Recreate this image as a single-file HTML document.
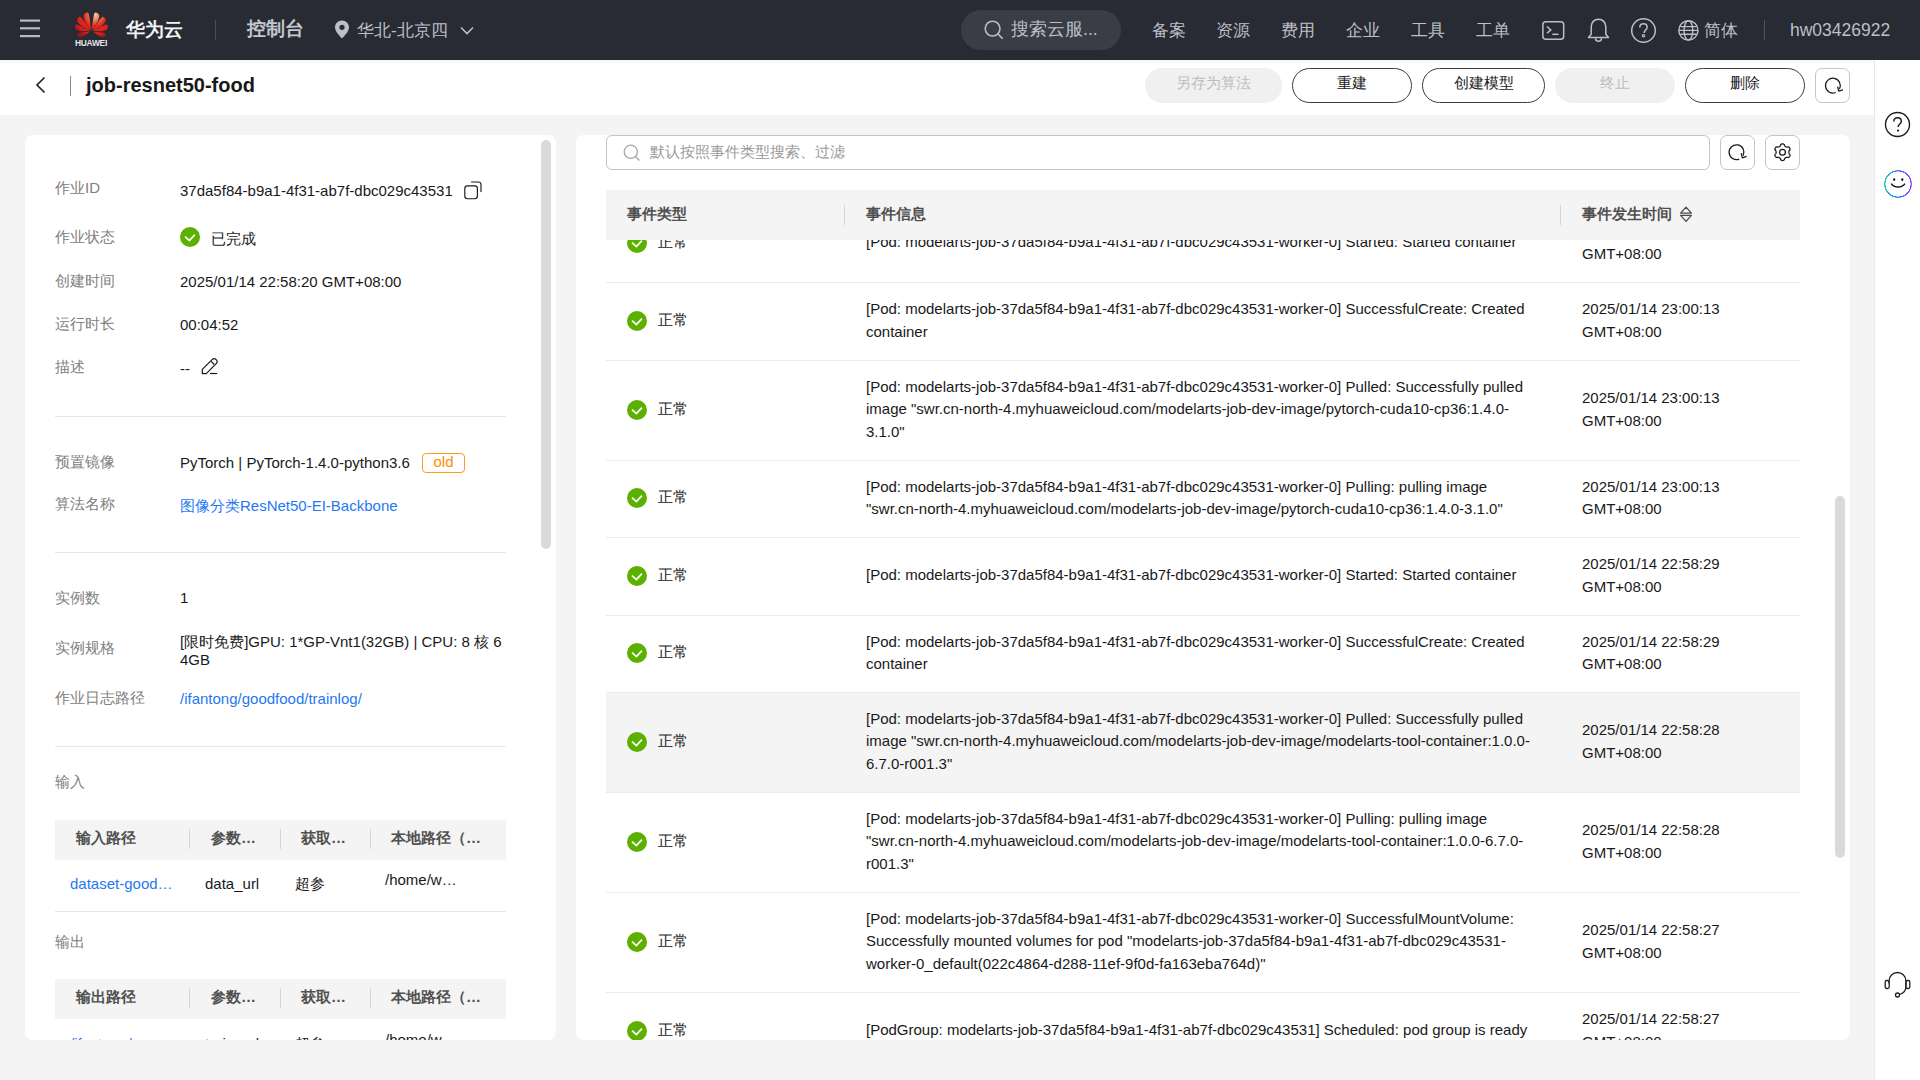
<!DOCTYPE html>
<html><head><meta charset="utf-8">
<style>
*{box-sizing:border-box;margin:0;padding:0}
html,body{width:1920px;height:1080px;overflow:hidden;background:#f4f4f4;font-family:"Liberation Sans",sans-serif;color:#191919}
.a{position:absolute}
.nw{white-space:nowrap}
#nav{position:absolute;left:0;top:0;width:1920px;height:60px;background:#282b34}
.nt{position:absolute;font-size:17px;color:#bcbfc6;line-height:20px;top:20.5px;white-space:nowrap}
#sub{position:absolute;left:0;top:60px;width:1874px;height:55px;background:#fff}
.btn{position:absolute;top:68px;height:35px;border-radius:18px;border:1px solid #3c3c3c;font-size:15px;line-height:28px;font-weight:500;text-align:center;color:#191919;background:#fff}
.btn.dis{border-color:#f0f0f0;background:#f0f0f0;color:#bdbdbd}
#side{position:absolute;left:1874px;top:60px;width:46px;height:1020px;background:#fff;border-left:1px solid #e9e9e9}
.card{position:absolute;top:135px;height:905px;background:#fff;border-radius:8px;overflow:hidden}
.lb{position:absolute;left:30px;font-size:15px;color:#808080;line-height:20px;white-space:nowrap}
.vl{position:absolute;left:155px;font-size:15px;color:#191919;line-height:20px;white-space:nowrap}
.sep{position:absolute;left:30px;width:451px;height:1px;background:#e6e6e6}
.lnk{color:#1f78f2}
.th{position:absolute;left:30px;width:451px;height:40px;background:#f4f4f4}
.th span{position:absolute;top:8px;font-size:15px;font-weight:bold;color:#505050;line-height:20px;white-space:nowrap}
.th i{position:absolute;top:9px;width:1px;height:20px;background:#d6d6d6}
.td{position:absolute;font-size:15px;line-height:20px;white-space:nowrap}
.row{position:absolute;left:30px;width:1194px}
.hl{position:absolute;left:30px;width:1194px;height:1px;background:#ebebeb}
.row .ck{position:absolute;left:21px;width:20px;height:20px}
.row .st{position:absolute;left:52px;font-size:15px;line-height:20px;color:#191919}
.row .msg{position:absolute;left:260px;font-size:15px;line-height:22.5px;white-space:nowrap;color:#191919}
.row .dt{position:absolute;left:976px;font-size:15px;line-height:22.5px;white-space:nowrap;color:#191919}
</style></head><body>

<div id="nav">
  <svg class="a" style="left:20px;top:19px" width="20" height="19" viewBox="0 0 20 19"><g fill="#b6b9c1"><rect x="0" y="0.5" width="20" height="2.2"/><rect x="0" y="8.2" width="20" height="2.2"/><rect x="0" y="16" width="20" height="2.2"/></g></svg>
  <svg class="a" style="left:74px;top:11px" width="34" height="37" viewBox="0 0 34 37">
    <defs><radialGradient id="pg" gradientUnits="userSpaceOnUse" cx="21" cy="4" r="24"><stop offset="0" stop-color="#f7c8a0"/><stop offset="0.22" stop-color="#f07a5a"/><stop offset="0.45" stop-color="#ea2a1c"/><stop offset="0.8" stop-color="#d81e1a"/><stop offset="1" stop-color="#951719"/></radialGradient></defs>
    <path fill="url(#pg)" d="M17.21 19.32C16.29 13.01 15.48 5.19 14.42 2.06C13.63 0.92 10.61 1.50 9.69 4.09C8.94 7.58 13.14 14.55 17.21 19.32ZM16.64 19.37C13.07 14.38 8.99 8.00 6.59 5.90C5.30 5.36 2.91 7.30 3.25 9.95C4.15 13.28 10.95 17.23 16.64 19.37ZM16.19 19.81C11.20 17.41 5.22 14.08 2.38 13.52C1.11 13.72 0.08 16.27 1.51 18.19C3.68 20.42 10.77 20.59 16.19 19.81ZM15.93 20.59C11.47 21.15 5.94 21.51 3.76 22.39C2.99 23.10 3.43 25.37 5.26 26.08C7.72 26.67 12.60 23.59 15.93 20.59ZM17.59 19.32C18.51 13.01 19.32 5.19 20.38 2.06C21.17 0.92 24.19 1.50 25.11 4.09C25.86 7.58 21.66 14.55 17.59 19.32ZM18.16 19.37C21.73 14.38 25.81 8.00 28.21 5.90C29.50 5.36 31.89 7.30 31.55 9.95C30.65 13.28 23.85 17.23 18.16 19.37ZM18.61 19.81C23.60 17.41 29.58 14.08 32.42 13.52C33.69 13.72 34.72 16.27 33.29 18.19C31.12 20.42 24.03 20.59 18.61 19.81ZM18.87 20.59C23.33 21.15 28.86 21.51 31.04 22.39C31.81 23.10 31.37 25.37 29.54 26.08C27.08 26.67 22.20 23.59 18.87 20.59Z"/>
    <text x="17" y="35.3" text-anchor="middle" font-family="Liberation Sans" font-weight="bold" font-size="8.4" fill="#e6e6e6" letter-spacing="-0.25">HUAWEI</text>
  </svg>
  <div class="nt" style="left:126px;top:20px;font-size:19px;font-weight:bold;color:#f4f4f4">华为云</div>
  <div class="a" style="left:215px;top:20px;width:1px;height:20px;background:#4a4d56"></div>
  <div class="nt" style="left:247px;top:19px;font-size:19px;font-weight:bold;color:#c3c6cd">控制台</div>
  <svg class="a" style="left:334px;top:20px" width="16" height="19" viewBox="0 0 16 19"><path d="M8 0.5C4 0.5 1 3.5 1 7.3c0 4.2 4.5 8.6 7 11.2c2.5-2.6 7-7 7-11.2C15 3.5 12 0.5 8 0.5z" fill="#bcbfc6"/><circle cx="8" cy="7.3" r="2.6" fill="#282b34"/></svg>
  <div class="nt" style="left:357px;top:19.5px;font-size:17.3px">华北-北京四</div>
  <svg class="a" style="left:460px;top:26px" width="14" height="9" viewBox="0 0 14 9"><path d="M1 1.5l6 6 6-6" fill="none" stroke="#bcbfc6" stroke-width="1.6"/></svg>

  <div class="a" style="left:961px;top:10px;width:160px;height:40px;border-radius:20px;background:#3a3d46"></div>
  <svg class="a" style="left:984px;top:20px" width="20" height="20" viewBox="0 0 20 20"><circle cx="8.6" cy="8.6" r="7.4" fill="none" stroke="#b9bcc3" stroke-width="1.6"/><path d="M14 14l4.6 4.6" stroke="#b9bcc3" stroke-width="1.7"/></svg>
  <div class="nt" style="left:1011px;top:19px;font-size:17.6px">搜索云服...</div>

  <div class="nt" style="left:1152px">备案</div>
  <div class="nt" style="left:1216px">资源</div>
  <div class="nt" style="left:1281px">费用</div>
  <div class="nt" style="left:1346px">企业</div>
  <div class="nt" style="left:1411px">工具</div>
  <div class="nt" style="left:1476px">工单</div>

  <svg class="a" style="left:1541px;top:20px" width="25" height="21" viewBox="0 0 25 21"><rect x="1.9" y="1.75" width="20.8" height="17.6" rx="3" fill="none" stroke="#bcbfc6" stroke-width="1.5"/><path d="M6 6.5l3.8 3.4-3.8 3.4" fill="none" stroke="#bcbfc6" stroke-width="1.5"/><path d="M11.3 14.3h6.2" stroke="#bcbfc6" stroke-width="1.5"/></svg>
  <svg class="a" style="left:1587px;top:18px" width="23" height="25" viewBox="0 0 23 25"><path d="M11.5 1.2c-4.2 0-7.3 3.3-7.3 7.5v7.5L1.5 19.5h20l-2.7-3.3V8.7c0-4.2-3.1-7.5-7.3-7.5z" fill="none" stroke="#bcbfc6" stroke-width="1.5" stroke-linejoin="round"/><path d="M8.5 20.2a3 3 0 0 0 6 0" fill="none" stroke="#bcbfc6" stroke-width="1.5"/></svg>
  <svg class="a" style="left:1630px;top:17px" width="27" height="27" viewBox="0 0 27 27"><circle cx="13.5" cy="13.5" r="11.8" fill="none" stroke="#bcbfc6" stroke-width="1.5"/><path d="M9.8 10.5c0-2.2 1.6-3.7 3.7-3.7s3.7 1.5 3.7 3.5c0 2.4-3 2.8-3 5.6" fill="none" stroke="#bcbfc6" stroke-width="1.5"/><circle cx="13.5" cy="18.8" r="1.1" fill="none" stroke="#bcbfc6" stroke-width="1.2"/></svg>
  <svg class="a" style="left:1677px;top:19px" width="23" height="23" viewBox="0 0 23 23"><g fill="none" stroke="#bcbfc6" stroke-width="1.4"><circle cx="11.4" cy="11.4" r="9.6"/><ellipse cx="11.4" cy="11.4" rx="4.4" ry="9.6"/><path d="M1.8 11.4h19.2M3.2 7.6h16.4M3.2 15.2h16.4"/></g></svg>
  <div class="nt" style="left:1704px;top:19.5px;font-size:17.3px">简体</div>
  <div class="a" style="left:1764px;top:20px;width:1px;height:20px;background:#50535c"></div>
  <div class="nt" style="left:1790px;top:19.5px;font-size:17.5px">hw03426922</div>
</div>

<div id="sub">
  <div class="a" style="left:0;top:0;width:1874px;height:4px;background:linear-gradient(rgba(0,0,0,0.05),rgba(0,0,0,0))"></div>
  <svg class="a" style="left:34px;top:76px;top:16px" width="13" height="18" viewBox="0 0 13 18"><path d="M10.5 1.5L3 9l7.5 7.5" fill="none" stroke="#252525" stroke-width="1.7"/></svg>
  <div class="a" style="left:70px;top:16px;width:1px;height:20px;background:#8c8c8c"></div>
  <div class="a nw" style="left:86px;top:13px;font-size:20px;font-weight:bold;line-height:24px;color:#191919">job-resnet50-food</div>
</div>
<div class="btn dis" style="left:1145px;width:137px">另存为算法</div>
<div class="btn" style="left:1292px;width:120px">重建</div>
<div class="btn" style="left:1422px;width:123px">创建模型</div>
<div class="btn dis" style="left:1555px;width:120px">终止</div>
<div class="btn" style="left:1685px;width:120px">删除</div>
<div class="a" style="left:1815px;top:68px;width:35px;height:35px;border:1px solid #c6c6c6;border-radius:7px;background:#fff"></div>
<svg class="a" style="left:1822px;top:75px" width="21" height="21" viewBox="0 0 21 21"><path d="M13.67 17.46A7.4 7.4 0 1 1 17.43 14.07" fill="none" stroke="#191919" stroke-width="1.25"/><path d="M15.60 11.60L16.70 16.20L21.00 14.80" fill="none" stroke="#191919" stroke-width="1.25" stroke-linejoin="round"/></svg>

<div id="side">
  <svg class="a" style="left:9px;top:51px" width="27" height="27" viewBox="0 0 27 27"><circle cx="13.5" cy="13.5" r="12" fill="none" stroke="#1f1f1f" stroke-width="1.4"/><path d="M9.8 10.6c0-2.2 1.6-3.8 3.8-3.8s3.7 1.6 3.7 3.6c0 2.4-3.2 2.8-3.2 5.7" fill="none" stroke="#1f1f1f" stroke-width="1.5"/><circle cx="14" cy="19.6" r="1.1" fill="#1f1f1f"/></svg>
  <div class="a" style="left:9px;top:109.5px;width:28px;height:28px;border-radius:50%;background:conic-gradient(from 0deg,#5a55f5 0deg,#8a3cf2 60deg,#9a30f0 100deg,#3a6cff 160deg,#1a8cff 200deg,#14b8b0 250deg,#18c98a 280deg,#2aa0e0 330deg,#5a55f5 360deg);-webkit-mask:radial-gradient(circle,transparent 12.4px,#000 12.7px,#000 13.8px,transparent 14.1px);mask:radial-gradient(circle,transparent 12.4px,#000 12.7px,#000 13.8px,transparent 14.1px)"></div>
  <svg class="a" style="left:8px;top:109px" width="30" height="30" viewBox="0 0 30 30"><ellipse cx="11.2" cy="10.6" rx="1.1" ry="1.4" fill="#111"/><ellipse cx="19.3" cy="10.6" rx="1.1" ry="1.4" fill="#111"/><path d="M8.3 14.6c1.6 2.4 4 3.5 6.8 3.5s5.2-1.1 6.8-3.5" fill="none" stroke="#111" stroke-width="1.5"/></svg>
  <svg class="a" style="left:9px;top:911px" width="27" height="28" viewBox="0 0 27 28"><g fill="none" stroke="#1f1f1f" stroke-width="1.3"><path d="M5 12.5V10a8.5 8.5 0 0 1 17 0v5.5c0 4-2.5 6.8-6.5 8"/><rect x="1.2" y="9.5" width="4" height="8" rx="1.5"/><rect x="21.8" y="9.5" width="4" height="8" rx="1.5"/><circle cx="13.5" cy="24" r="2"/></g></svg>
</div>


<div class="card" id="lc" style="left:25px;width:531px">
  <div class="a" style="left:516px;top:5px;width:10px;height:409px;border-radius:5px;background:#dadada"></div>
  <div class="lb" style="top:43px">作业ID</div>
  <div class="vl" style="top:46px">37da5f84-b9a1-4f31-ab7f-dbc029c43531</div>
  <svg class="a" style="left:438px;top:45px" width="20" height="20" viewBox="0 0 20 20"><g fill="none" stroke="#191919" stroke-width="1.15"><rect x="1.8" y="5.9" width="12.6" height="12.8" rx="2.6"/><path d="M8.5 1.95H15.5a2.5 2.5 0 0 1 2.5 2.5V11.6" stroke-linecap="round"/></g></svg>

  <div class="lb" style="top:92px">作业状态</div>
  <svg class="a" style="left:155px;top:92px" width="20" height="20" viewBox="0 0 20 20"><circle cx="10" cy="10" r="10" fill="#5cb000"/><path d="M5 9.6l4.4 4 5.5-6" fill="none" stroke="#fff" stroke-width="1.7"/></svg>
  <div class="vl" style="left:186px;top:94px">已完成</div>

  <div class="lb" style="top:136px">创建时间</div>
  <div class="vl" style="top:137px">2025/01/14 22:58:20 GMT+08:00</div>
  <div class="lb" style="top:179px">运行时长</div>
  <div class="vl" style="top:180px">00:04:52</div>
  <div class="lb" style="top:222px">描述</div>
  <div class="vl" style="top:223.5px">--</div>
  <svg class="a" style="left:176px;top:222px" width="18" height="18" viewBox="0 0 18 18"><g fill="none" stroke="#191919" stroke-width="1.2" stroke-linejoin="round"><path d="M1.3 12.4L11.1 2.6A2.9 2.9 0 0 1 15.2 6.7L5.3 16.6H1.3Z"/><path d="M10.2 4.4L13.3 7.5"/><path d="M8.9 16.5H16.2"/></g></svg>

  <div class="sep" style="top:281px"></div>

  <div class="lb" style="top:317px">预置镜像</div>
  <div class="vl" style="top:318px">PyTorch | PyTorch-1.4.0-python3.6</div>
  <div class="a" style="left:397px;top:318px;width:43px;height:20px;border:1px solid #ff9a1f;border-radius:4px;color:#ff8c00;font-size:15px;line-height:15px;text-align:center">old</div>
  <div class="lb" style="top:359px">算法名称</div>
  <div class="vl lnk" style="top:361px">图像分类ResNet50-EI-Backbone</div>

  <div class="sep" style="top:417px"></div>

  <div class="lb" style="top:453px">实例数</div>
  <div class="vl" style="top:453px">1</div>
  <div class="lb" style="top:503px">实例规格</div>
  <div class="vl" style="top:497.5px;line-height:18px">[限时免费]GPU: 1*GP-Vnt1(32GB) | CPU: 8 核 6<br>4GB</div>
  <div class="lb" style="top:553px">作业日志路径</div>
  <div class="vl lnk" style="top:554px">/ifantong/goodfood/trainlog/</div>

  <div class="sep" style="top:611px"></div>

  <div class="lb" style="top:637px">输入</div>
  <div class="th" style="top:685px"><span style="left:21px">输入路径</span><i style="left:134px"></i><span style="left:156px">参数…</span><i style="left:225px"></i><span style="left:246px">获取…</span><i style="left:315px"></i><span style="left:336px">本地路径（…</span></div>
  <div class="td lnk" style="left:45px;top:739px">dataset-good…</div>
  <div class="td" style="left:180px;top:739px">data_url</div>
  <div class="td" style="left:270px;top:739px">超参</div>
  <div class="td" style="left:360px;top:735px">/home/w…</div>
  <div class="sep" style="top:776px"></div>

  <div class="lb" style="top:797px">输出</div>
  <div class="th" style="top:844px"><span style="left:21px">输出路径</span><i style="left:134px"></i><span style="left:156px">参数…</span><i style="left:225px"></i><span style="left:246px">获取…</span><i style="left:315px"></i><span style="left:336px">本地路径（…</span></div>
  <div class="td lnk" style="left:45px;top:899px">/ifantong/…</div>
  <div class="td" style="left:180px;top:899px">train_url</div>
  <div class="td" style="left:270px;top:899px">超参</div>
  <div class="td" style="left:360px;top:895px">/home/w…</div>
</div>

<div class="card" id="rc" style="left:576px;width:1274px">
<div class="a" style="left:30px;top:0;width:1104px;height:35px;border:1px solid #c4c4c4;border-radius:6px"></div>
<svg class="a" style="left:47px;top:9px" width="18" height="18" viewBox="0 0 18 18"><circle cx="7.8" cy="7.8" r="6.6" fill="none" stroke="#a8a8a8" stroke-width="1.3"/><path d="M12.6 12.6l3.8 3.8" stroke="#a8a8a8" stroke-width="1.4"/></svg>
<div class="a nw" style="left:74px;top:7px;font-size:15px;line-height:20px;color:#9a9a9a">默认按照事件类型搜索、过滤</div>
<div class="a" style="left:1144px;top:0;width:35px;height:35px;border:1px solid #c4c4c4;border-radius:7px"></div>
<svg class="a" style="left:1151px;top:7px" width="21" height="21" viewBox="0 0 21 21"><path d="M12.27 17.06A7.4 7.4 0 1 1 16.03 13.67" fill="none" stroke="#191919" stroke-width="1.25"/><path d="M14.20 11.20L15.30 15.80L19.60 14.40" fill="none" stroke="#191919" stroke-width="1.25" stroke-linejoin="round"/></svg>
<div class="a" style="left:1189px;top:0;width:35px;height:35px;border:1px solid #c4c4c4;border-radius:7px"></div>
<svg class="a" style="left:1196px;top:7px" width="21" height="21" viewBox="0 0 21 21"><path d="M16.85 10.20 L16.86 10.37 L16.87 10.53 L16.90 10.70 L16.93 10.88 L16.98 11.05 L17.04 11.24 L17.11 11.43 L17.21 11.63 L17.33 11.84 L17.60 12.10 L17.86 12.38 L17.96 12.62 L18.02 12.86 L18.04 13.09 L18.04 13.32 L18.02 13.55 L17.98 13.77 L17.91 13.98 L17.83 14.18 L17.73 14.37 L17.61 14.56 L17.48 14.73 L17.33 14.89 L17.16 15.04 L16.98 15.17 L16.78 15.28 L16.56 15.38 L16.33 15.45 L16.07 15.49 L15.70 15.40 L15.33 15.29 L15.09 15.29 L14.87 15.32 L14.67 15.35 L14.48 15.39 L14.30 15.43 L14.13 15.49 L13.97 15.55 L13.82 15.62 L13.68 15.70 L13.53 15.79 L13.40 15.88 L13.26 15.99 L13.13 16.11 L13.00 16.24 L12.87 16.38 L12.75 16.54 L12.62 16.72 L12.49 16.93 L12.40 17.30 L12.29 17.67 L12.13 17.87 L11.95 18.04 L11.76 18.18 L11.57 18.29 L11.36 18.39 L11.15 18.46 L10.94 18.51 L10.72 18.54 L10.50 18.55 L10.28 18.54 L10.06 18.51 L9.85 18.46 L9.64 18.39 L9.43 18.29 L9.24 18.18 L9.05 18.04 L8.87 17.87 L8.71 17.67 L8.60 17.30 L8.51 16.93 L8.38 16.72 L8.25 16.54 L8.13 16.38 L8.00 16.24 L7.87 16.11 L7.74 15.99 L7.60 15.88 L7.47 15.79 L7.33 15.70 L7.18 15.62 L7.03 15.55 L6.87 15.49 L6.70 15.43 L6.52 15.39 L6.33 15.35 L6.13 15.32 L5.91 15.29 L5.67 15.29 L5.30 15.40 L4.93 15.49 L4.67 15.45 L4.44 15.38 L4.22 15.28 L4.02 15.17 L3.84 15.04 L3.67 14.89 L3.52 14.73 L3.39 14.56 L3.27 14.37 L3.17 14.18 L3.09 13.98 L3.02 13.77 L2.98 13.55 L2.96 13.32 L2.96 13.09 L2.98 12.86 L3.04 12.62 L3.14 12.38 L3.40 12.10 L3.67 11.84 L3.79 11.63 L3.89 11.43 L3.96 11.24 L4.02 11.05 L4.07 10.88 L4.10 10.70 L4.13 10.53 L4.14 10.37 L4.15 10.20 L4.14 10.03 L4.13 9.87 L4.10 9.70 L4.07 9.52 L4.02 9.35 L3.96 9.16 L3.89 8.97 L3.79 8.77 L3.67 8.56 L3.40 8.30 L3.14 8.02 L3.04 7.78 L2.98 7.54 L2.96 7.31 L2.96 7.08 L2.98 6.85 L3.02 6.63 L3.09 6.42 L3.17 6.22 L3.27 6.03 L3.39 5.84 L3.52 5.67 L3.67 5.51 L3.84 5.36 L4.02 5.23 L4.22 5.12 L4.44 5.02 L4.67 4.95 L4.93 4.91 L5.30 5.00 L5.67 5.11 L5.91 5.11 L6.13 5.08 L6.33 5.05 L6.52 5.01 L6.70 4.97 L6.87 4.91 L7.03 4.85 L7.18 4.78 L7.32 4.70 L7.47 4.61 L7.60 4.52 L7.74 4.41 L7.87 4.29 L8.00 4.16 L8.13 4.02 L8.25 3.86 L8.38 3.68 L8.51 3.47 L8.60 3.10 L8.71 2.73 L8.87 2.53 L9.05 2.36 L9.24 2.22 L9.43 2.11 L9.64 2.01 L9.85 1.94 L10.06 1.89 L10.28 1.86 L10.50 1.85 L10.72 1.86 L10.94 1.89 L11.15 1.94 L11.36 2.01 L11.57 2.11 L11.76 2.22 L11.95 2.36 L12.13 2.53 L12.29 2.73 L12.40 3.10 L12.49 3.47 L12.62 3.68 L12.75 3.86 L12.87 4.02 L13.00 4.16 L13.13 4.29 L13.26 4.41 L13.40 4.52 L13.53 4.61 L13.68 4.70 L13.82 4.78 L13.97 4.85 L14.13 4.91 L14.30 4.97 L14.48 5.01 L14.67 5.05 L14.87 5.08 L15.09 5.11 L15.33 5.11 L15.70 5.00 L16.07 4.91 L16.33 4.95 L16.56 5.02 L16.78 5.12 L16.98 5.23 L17.16 5.36 L17.33 5.51 L17.48 5.67 L17.61 5.84 L17.73 6.03 L17.83 6.22 L17.91 6.42 L17.98 6.63 L18.02 6.85 L18.04 7.08 L18.04 7.31 L18.02 7.54 L17.96 7.78 L17.86 8.02 L17.60 8.30 L17.33 8.56 L17.21 8.77 L17.11 8.97 L17.04 9.16 L16.98 9.35 L16.93 9.52 L16.90 9.70 L16.87 9.87 L16.86 10.03 L16.85 10.20Z" fill="none" stroke="#191919" stroke-width="1.25" stroke-linejoin="round"/><circle cx="10.5" cy="10.2" r="2.9" fill="none" stroke="#191919" stroke-width="1.25"/></svg>
<div class="a" style="left:0;top:0;width:1274px;height:905px;overflow:hidden">
<div class="row" style="top:69px;height:78px;"><svg class="ck" viewBox="0 0 20 20" style="top:28.5px"><circle cx="10" cy="10" r="10" fill="#5cb000"/><path d="M5 9.6l4.4 4 5.5-6" fill="none" stroke="#fff" stroke-width="1.7"/></svg><div class="st" style="top:27.5px">正常</div><div class="msg" style="top:27.25px">[Pod: modelarts-job-37da5f84-b9a1-4f31-ab7f-dbc029c43531-worker-0] Started: Started container</div><div class="dt" style="top:16.0px">2025/01/14 23:00:14<br>GMT+08:00</div></div>
<div class="row" style="top:147px;height:78px;"><svg class="ck" viewBox="0 0 20 20" style="top:28.5px"><circle cx="10" cy="10" r="10" fill="#5cb000"/><path d="M5 9.6l4.4 4 5.5-6" fill="none" stroke="#fff" stroke-width="1.7"/></svg><div class="st" style="top:27.5px">正常</div><div class="msg" style="top:16.0px">[Pod: modelarts-job-37da5f84-b9a1-4f31-ab7f-dbc029c43531-worker-0] SuccessfulCreate: Created<br>container</div><div class="dt" style="top:16.0px">2025/01/14 23:00:13<br>GMT+08:00</div></div>
<div class="row" style="top:225px;height:100px;"><svg class="ck" viewBox="0 0 20 20" style="top:39.5px"><circle cx="10" cy="10" r="10" fill="#5cb000"/><path d="M5 9.6l4.4 4 5.5-6" fill="none" stroke="#fff" stroke-width="1.7"/></svg><div class="st" style="top:38.5px">正常</div><div class="msg" style="top:15.75px">[Pod: modelarts-job-37da5f84-b9a1-4f31-ab7f-dbc029c43531-worker-0] Pulled: Successfully pulled<br>image "swr.cn-north-4.myhuaweicloud.com/modelarts-job-dev-image/pytorch-cuda10-cp36:1.4.0-<br>3.1.0"</div><div class="dt" style="top:27.0px">2025/01/14 23:00:13<br>GMT+08:00</div></div>
<div class="row" style="top:325px;height:77px;"><svg class="ck" viewBox="0 0 20 20" style="top:28.0px"><circle cx="10" cy="10" r="10" fill="#5cb000"/><path d="M5 9.6l4.4 4 5.5-6" fill="none" stroke="#fff" stroke-width="1.7"/></svg><div class="st" style="top:27.0px">正常</div><div class="msg" style="top:15.5px">[Pod: modelarts-job-37da5f84-b9a1-4f31-ab7f-dbc029c43531-worker-0] Pulling: pulling image<br>"swr.cn-north-4.myhuaweicloud.com/modelarts-job-dev-image/pytorch-cuda10-cp36:1.4.0-3.1.0"</div><div class="dt" style="top:15.5px">2025/01/14 23:00:13<br>GMT+08:00</div></div>
<div class="row" style="top:402px;height:78px;"><svg class="ck" viewBox="0 0 20 20" style="top:28.5px"><circle cx="10" cy="10" r="10" fill="#5cb000"/><path d="M5 9.6l4.4 4 5.5-6" fill="none" stroke="#fff" stroke-width="1.7"/></svg><div class="st" style="top:27.5px">正常</div><div class="msg" style="top:27.25px">[Pod: modelarts-job-37da5f84-b9a1-4f31-ab7f-dbc029c43531-worker-0] Started: Started container</div><div class="dt" style="top:16.0px">2025/01/14 22:58:29<br>GMT+08:00</div></div>
<div class="row" style="top:480px;height:77px;"><svg class="ck" viewBox="0 0 20 20" style="top:28.0px"><circle cx="10" cy="10" r="10" fill="#5cb000"/><path d="M5 9.6l4.4 4 5.5-6" fill="none" stroke="#fff" stroke-width="1.7"/></svg><div class="st" style="top:27.0px">正常</div><div class="msg" style="top:15.5px">[Pod: modelarts-job-37da5f84-b9a1-4f31-ab7f-dbc029c43531-worker-0] SuccessfulCreate: Created<br>container</div><div class="dt" style="top:15.5px">2025/01/14 22:58:29<br>GMT+08:00</div></div>
<div class="row" style="top:557px;height:100px;background:linear-gradient(#fff 0,#fff 1px,#f4f4f4 1px,#f4f4f4 100px)"><svg class="ck" viewBox="0 0 20 20" style="top:39.5px"><circle cx="10" cy="10" r="10" fill="#5cb000"/><path d="M5 9.6l4.4 4 5.5-6" fill="none" stroke="#fff" stroke-width="1.7"/></svg><div class="st" style="top:38.5px">正常</div><div class="msg" style="top:15.75px">[Pod: modelarts-job-37da5f84-b9a1-4f31-ab7f-dbc029c43531-worker-0] Pulled: Successfully pulled<br>image "swr.cn-north-4.myhuaweicloud.com/modelarts-job-dev-image/modelarts-tool-container:1.0.0-<br>6.7.0-r001.3"</div><div class="dt" style="top:27.0px">2025/01/14 22:58:28<br>GMT+08:00</div></div>
<div class="row" style="top:657px;height:100px;"><svg class="ck" viewBox="0 0 20 20" style="top:39.5px"><circle cx="10" cy="10" r="10" fill="#5cb000"/><path d="M5 9.6l4.4 4 5.5-6" fill="none" stroke="#fff" stroke-width="1.7"/></svg><div class="st" style="top:38.5px">正常</div><div class="msg" style="top:15.75px">[Pod: modelarts-job-37da5f84-b9a1-4f31-ab7f-dbc029c43531-worker-0] Pulling: pulling image<br>"swr.cn-north-4.myhuaweicloud.com/modelarts-job-dev-image/modelarts-tool-container:1.0.0-6.7.0-<br>r001.3"</div><div class="dt" style="top:27.0px">2025/01/14 22:58:28<br>GMT+08:00</div></div>
<div class="row" style="top:757px;height:100px;"><svg class="ck" viewBox="0 0 20 20" style="top:39.5px"><circle cx="10" cy="10" r="10" fill="#5cb000"/><path d="M5 9.6l4.4 4 5.5-6" fill="none" stroke="#fff" stroke-width="1.7"/></svg><div class="st" style="top:38.5px">正常</div><div class="msg" style="top:15.75px">[Pod: modelarts-job-37da5f84-b9a1-4f31-ab7f-dbc029c43531-worker-0] SuccessfulMountVolume:<br>Successfully mounted volumes for pod "modelarts-job-37da5f84-b9a1-4f31-ab7f-dbc029c43531-<br>worker-0_default(022c4864-d288-11ef-9f0d-fa163eba764d)"</div><div class="dt" style="top:27.0px">2025/01/14 22:58:27<br>GMT+08:00</div></div>
<div class="row" style="top:857px;height:78px;"><svg class="ck" viewBox="0 0 20 20" style="top:28.5px"><circle cx="10" cy="10" r="10" fill="#5cb000"/><path d="M5 9.6l4.4 4 5.5-6" fill="none" stroke="#fff" stroke-width="1.7"/></svg><div class="st" style="top:27.5px">正常</div><div class="msg" style="top:27.25px">[PodGroup: modelarts-job-37da5f84-b9a1-4f31-ab7f-dbc029c43531] Scheduled: pod group is ready</div><div class="dt" style="top:16.0px">2025/01/14 22:58:27<br>GMT+08:00</div></div>
<div class="hl" style="top:147px"></div><div class="hl" style="top:225px"></div><div class="hl" style="top:325px"></div><div class="hl" style="top:402px"></div><div class="hl" style="top:480px"></div><div class="hl" style="top:557px"></div><div class="hl" style="top:657px"></div><div class="hl" style="top:757px"></div><div class="hl" style="top:857px"></div></div>
<div class="a" style="left:30px;top:55px;width:1194px;height:50px;background:#f4f4f4">
<div class="a nw" style="left:21px;top:14px;font-size:15px;font-weight:bold;line-height:20px;color:#505050">事件类型</div>
<div class="a" style="left:238px;top:15px;width:1px;height:20px;background:#d6d6d6"></div>
<div class="a nw" style="left:260px;top:14px;font-size:15px;font-weight:bold;line-height:20px;color:#505050">事件信息</div>
<div class="a" style="left:954px;top:15px;width:1px;height:20px;background:#d6d6d6"></div>
<div class="a nw" style="left:976px;top:14px;font-size:15px;font-weight:bold;line-height:20px;color:#505050">事件发生时间</div>
<svg class="a" style="left:1073px;top:16px" width="14" height="18" viewBox="0 0 14 18"><g fill="none" stroke="#4a4a4a" stroke-width="1.3" stroke-linejoin="round"><path d="M1.6 7.1L7 1.1l5.4 6z"/><path d="M1.6 9.4L7 15.4l5.4-6z"/></g></svg>
</div>
<div class="a" style="left:1259px;top:361px;width:10px;height:362px;border-radius:5px;background:#dadada"></div>
</div>

</body></html>
